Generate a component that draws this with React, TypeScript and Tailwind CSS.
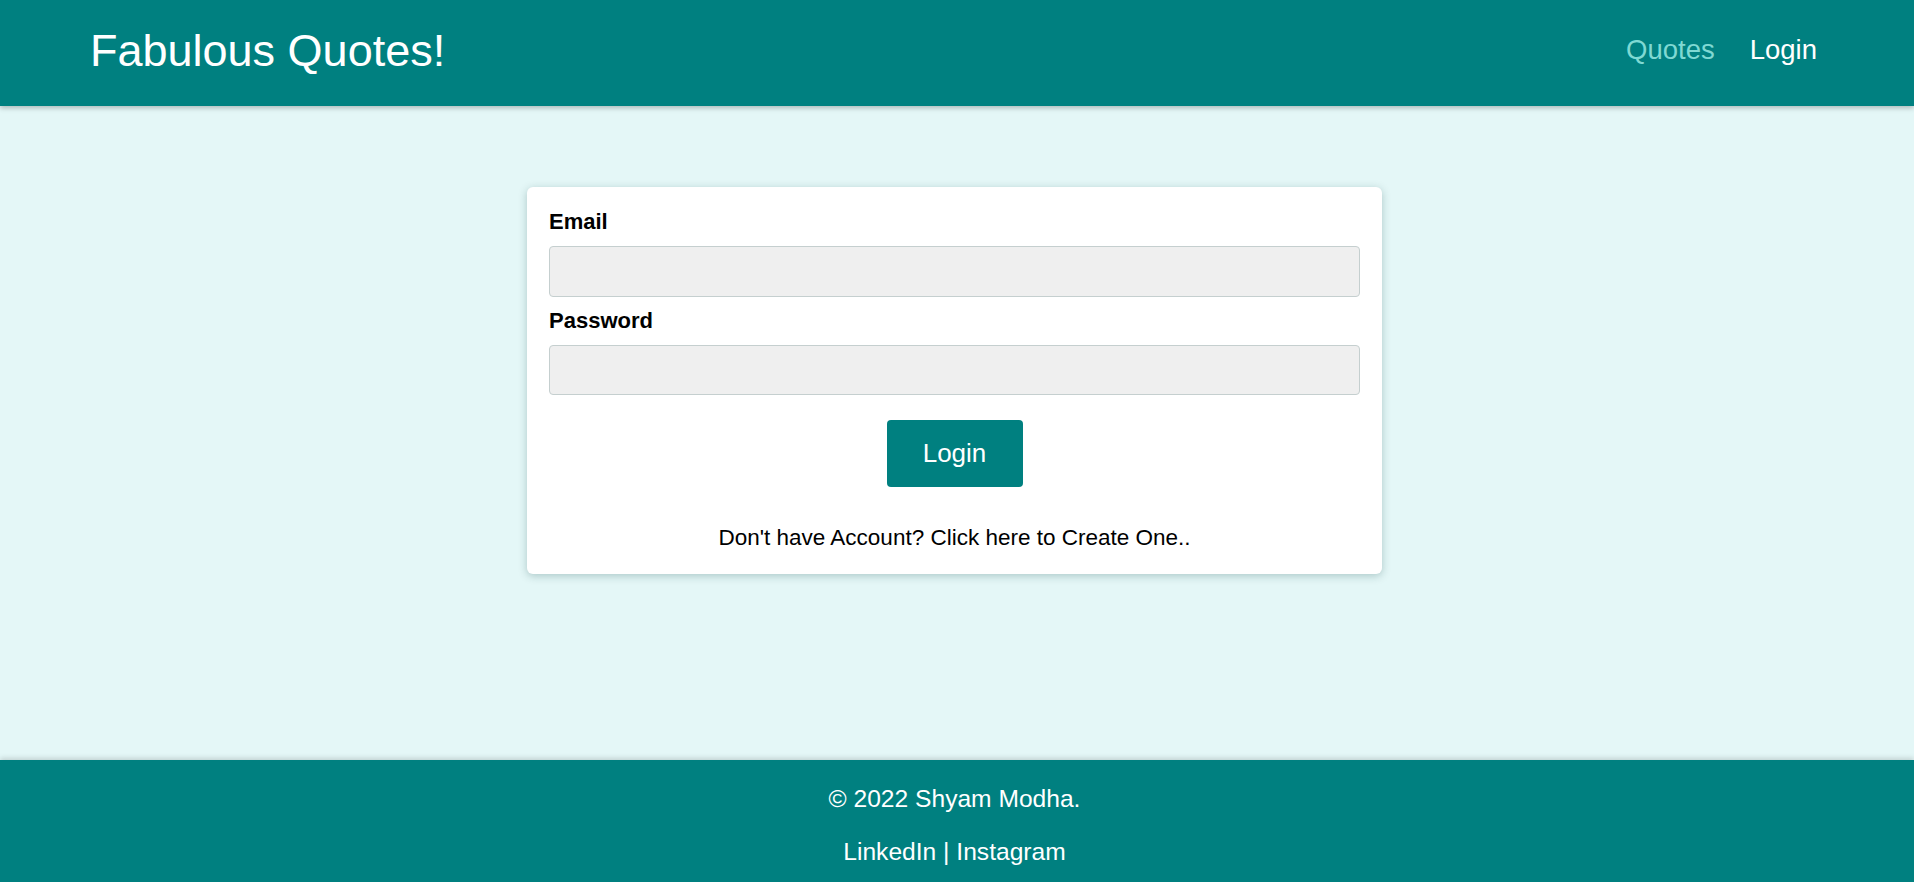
import React, { useState } from 'react';

function Header() {
  return (
    <header className="h-[106px] bg-[#008080] flex items-center justify-between pl-[90px] pr-[97px] pb-[6px] shadow-[0_2px_5px_rgba(0,0,0,0.25)] relative z-10">
      <h1 className="text-[45px] text-white leading-none">Fabulous Quotes!</h1>
      <nav className="flex items-center gap-[35px] text-[27.5px]">
        <a href="#" className="text-[#7fd9d3]">Quotes</a>
        <a href="#" className="text-white">Login</a>
      </nav>
    </header>
  );
}

function LoginCard() {
  const [email, setEmail] = useState('');
  const [password, setPassword] = useState('');

  return (
    <form
      className="w-[855px] bg-white rounded-[6px] shadow-[0_2px_8px_rgba(0,60,60,0.25)] px-[22px] pt-[22px] pb-[23px] flex flex-col"
      onSubmit={e => e.preventDefault()}
    >
      <label className="text-[22px] font-bold text-black leading-[25px] mb-[12px]">Email</label>
      <input
        type="email"
        value={email}
        onChange={e => setEmail(e.target.value)}
        className="h-[51px] w-full bg-[#efefef] border border-[#c5cfcf] rounded-[4px] px-3 text-[20px] outline-none mb-[11px]"
      />
      <label className="text-[22px] font-bold text-black leading-[25px] mb-[12px]">Password</label>
      <input
        type="password"
        value={password}
        onChange={e => setPassword(e.target.value)}
        className="h-[50px] w-full bg-[#efefef] border border-[#c5cfcf] rounded-[4px] px-3 text-[20px] outline-none"
      />
      <div className="flex justify-center mt-[25px]">
        <button type="submit" className="w-[136px] h-[67px] bg-[#008080] text-white text-[26px] rounded-[4px]">
          Login
        </button>
      </div>
      <p className="text-center text-[22.5px] leading-[26px] text-black mt-[38px]">
        Don't have Account? Click here to Create One..
      </p>
    </form>
  );
}

function Footer() {
  return (
    <footer className="bg-[#008080] text-white text-[24.6px] leading-[29px] text-center pt-[24px] pb-[24px] pr-[5px] shadow-[0_-2px_5px_rgba(0,0,0,0.15)]">
      <p>© 2022 Shyam Modha.</p>
      <p className="mt-[24px]">
        <a href="#">LinkedIn</a> | <a href="#">Instagram</a>
      </p>
    </footer>
  );
}

export default function App() {
  return (
    <div className="bg-[#e4f7f7] font-['Liberation_Sans',Arial,sans-serif]">
      <Header />
      <main className="h-[654px] pt-[81px] pr-[5px] flex justify-center items-start">
        <LoginCard />
      </main>
      <Footer />
    </div>
  );
}
